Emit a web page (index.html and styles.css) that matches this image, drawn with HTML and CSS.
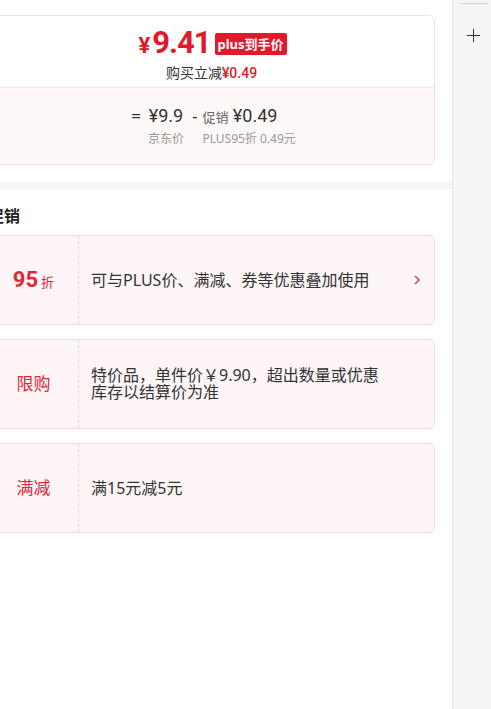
FILE: index.html
```html
<!DOCTYPE html>
<html lang="zh-CN">

<head>
    <meta charset="UTF-8">
    <meta name="viewport" content="width=device-width, initial-scale=1.0">
    <title>促销详情</title>
    <link rel="stylesheet" href="styles.css">
</head>

<body>
    <div class="app">
        <div class="main">
            <div class="content">
                <div class="price-card">
                    <div class="price-top">
                        <div class="price-line">
                            <span class="price"><span class="yen">¥</span>9.41</span>
                            <span class="badge">plus到手价</span>
                        </div>
                        <div class="save">购买立减<span class="red">¥0.49</span></div>
                    </div>
                    <div class="price-bottom">
                        <div class="calc">
                            <span class="op">=</span>
                            <span class="val center">¥9.9</span>
                            <span class="op minus">-</span>
                            <span class="val"><span class="sub">促销</span> ¥0.49</span>
                            <span></span>
                            <span class="lbl center">京东价</span>
                            <span></span>
                            <span class="lbl">PLUS95折 0.49元</span>
                        </div>
                    </div>
                </div>
            </div>

            <div class="band"></div>

            <div class="content">
                <h3 class="title">促销</h3>

                <div class="promo">
                    <div class="tag"><span class="big">95</span><span class="small">折</span></div>
                    <div class="desc">可与PLUS价、满减、券等优惠叠加使用</div>
                    <svg class="arrow" width="6" height="10" viewBox="0 0 6 10">
                        <polyline points="1,1 5,5 1,9" fill="none" stroke="#c93a4c" stroke-width="1.4" />
                    </svg>
                </div>

                <div class="promo">
                    <div class="tag">限购</div>
                    <div class="desc narrow">特价品，单件价￥9.90，超出数量或优惠库存以结算价为准</div>
                </div>

                <div class="promo">
                    <div class="tag">满减</div>
                    <div class="desc">满15元减5元</div>
                </div>
            </div>
        </div>

        <div class="side">
            <div class="side-line"></div>
            <svg class="plus" width="13" height="13" viewBox="0 0 13 13">
                <path d="M6.5 0 V13 M0 6.5 H13" stroke="#333" stroke-width="1" fill="none" />
            </svg>
        </div>
    </div>
</body>

</html>
```

FILE: styles.css
```css
html,
body {
    height: 100%;
}

body {
    margin: 0;
    font-family: "Noto Sans", "Noto Sans CJK SC", sans-serif;
    color: #333;
    background-color: #fff;
}

.app {
    display: flex;
    height: 100%;
}

.main {
    width: 452px;
    overflow: hidden;
    background-color: #fff;
}

.content {
    margin-left: -12px;
    margin-right: 17px;
}

/* price card */
.price-card {
    margin-top: 15px;
    border: 1px solid #f1e1e4;
    border-radius: 6px;
    overflow: hidden;
}

.price-top {
    padding: 10px 0 5px;
    text-align: center;
    background-color: #fff;
}

.price-line {
    display: flex;
    justify-content: center;
    align-items: center;
    height: 36px;
    padding-left: 2px;
}

.price {
    font-family: Roboto, "Noto Sans", sans-serif;
    font-size: 31px;
    font-weight: 700;
    letter-spacing: -1px;
    color: #e4182b;
    line-height: 36px;
}

.yen {
    font-size: 22px;
    margin-right: 3px;
}

.badge {
    margin-left: 4px;
    padding: 0 3px;
    height: 22px;
    line-height: 22px;
    font-size: 13px;
    font-weight: 700;
    color: #fff;
    background-color: #e4182b;
    border-radius: 2px;
}

.save {
    margin-top: 2px;
    font-size: 14px;
    line-height: 18px;
    color: #333;
}

.red {
    color: #e4182b;
    font-family: Roboto, "Noto Sans", sans-serif;
    font-weight: 500;
}

.price-bottom {
    border-top: 1px solid #f5e7e9;
    background-color: #fef8f8;
    padding: 17px 0;
    text-align: center;
}

.calc {
    display: inline-grid;
    grid-template-columns: auto auto auto auto;
    column-gap: 7px;
    row-gap: 3px;
    text-align: left;
    margin-left: 4px;
}

.op {
    font-size: 17px;
    line-height: 22px;
    color: #333;
}

.minus {
    margin-left: 1px;
    margin-right: -2px;
}

.val {
    font-family: Roboto, "Noto Sans", sans-serif;
    font-size: 18px;
    font-weight: 400;
    line-height: 22px;
    color: #333;
}

.sub {
    font-family: "Noto Sans", "Noto Sans CJK SC", sans-serif;
    font-size: 13px;
    color: #666;
}

.lbl {
    font-size: 12px;
    line-height: 16px;
    color: #999;
}

.center {
    justify-self: center;
}

.band {
    height: 7px;
    margin-top: 17px;
    background-color: #f5f6fa;
}

/* promotions */
.title {
    margin: 16px 0 8px;
    font-size: 16px;
    line-height: 22px;
    font-weight: 700;
    color: #222;
}

.promo {
    display: flex;
    align-items: center;
    height: 88px;
    margin-bottom: 14px;
    border: 1px solid #f2dde2;
    border-radius: 6px;
    background-color: #fdf5f6;
}

.tag {
    display: flex;
    align-items: baseline;
    justify-content: center;
    width: 89px;
    height: 100%;
    line-height: 88px;
    border-right: 1px dashed #efd0d7;
    font-size: 17px;
    color: #e0283c;
}

.big {
    font-family: Roboto, "Noto Sans", sans-serif;
    font-size: 22px;
    font-weight: 700;
    margin-right: 3px;
}

.small {
    font-size: 13px;
}

.desc {
    flex: 1;
    padding-left: 12px;
    font-size: 16px;
    line-height: 17px;
    color: #333;
}

.desc.narrow {
    flex: none;
    width: 296px;
}

.arrow {
    margin-right: 14px;
}

/* right side bar */
.side {
    flex: 1;
    border-left: 1px solid #e6e6e6;
    background-color: #f5f5f5;
}

.side-line {
    height: 1px;
    margin: 3px 3px 0 7px;
    background-color: #d4d4d4;
}

.plus {
    display: block;
    margin: 25px auto 0;
    position: relative;
    left: 1px;
}
```
